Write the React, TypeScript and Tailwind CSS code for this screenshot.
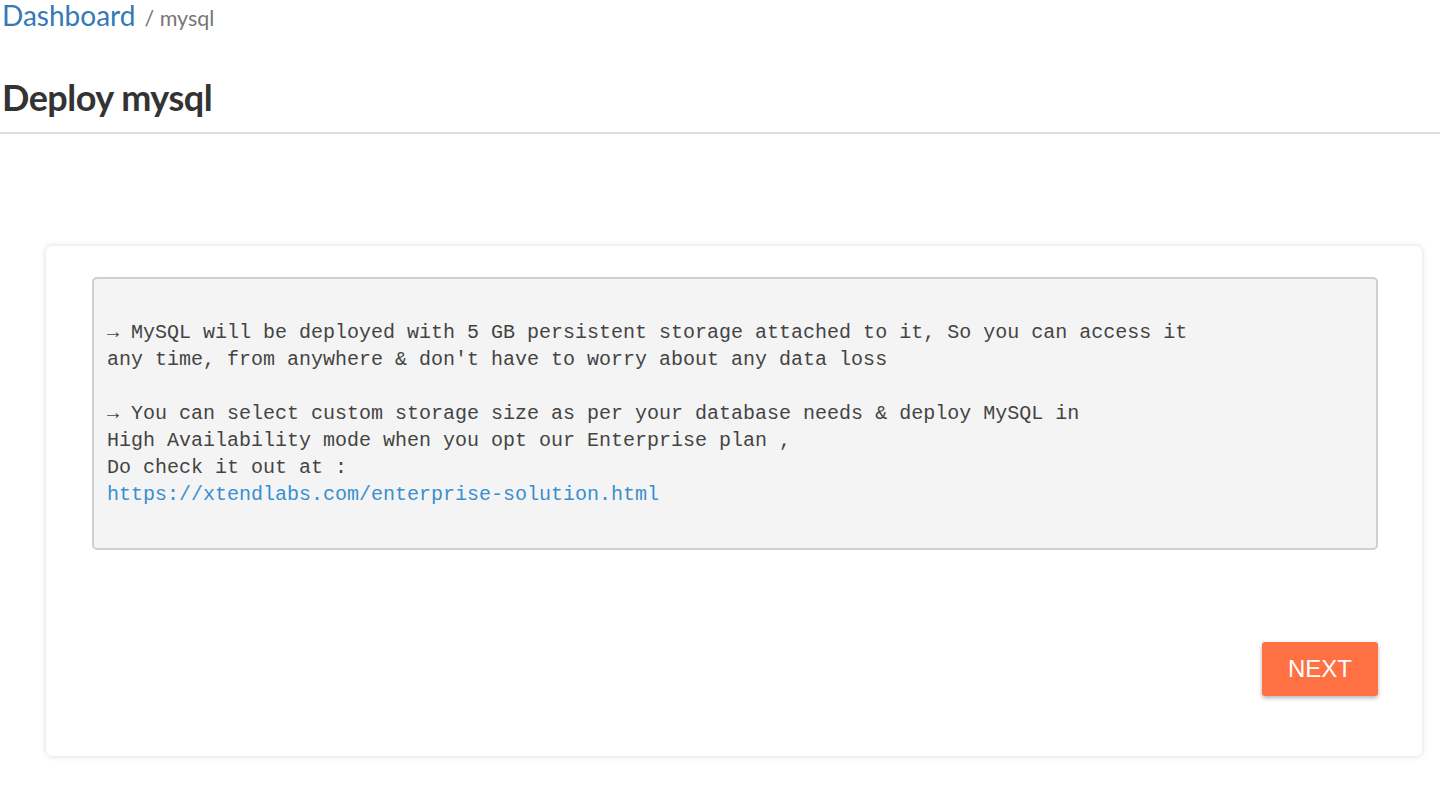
export default function App() {
  return (
    <div className="min-h-[788px] bg-white font-['Lato',sans-serif] text-[#333]">
      {/* breadcrumb */}
      <div className="flex items-baseline px-[2px] leading-[30px]">
        <a className="text-[28px] text-[#337ab7]">Dashboard</a>
        <span className="ml-[9px] text-[21.5px] text-[#777]">/ mysql</span>
      </div>

      <h1 className="mt-[42px] px-[2px] text-[36px] font-bold leading-[44px] tracking-[-0.5px] text-[#333]">
        Deploy mysql
      </h1>
      <div className="mt-[13px] h-[2px] bg-[#ddd]" />

      <div className="ml-[46px] mr-[18px] mt-[112px] rounded-[6px] bg-white pb-[60px] pl-[46px] pr-[44px] pt-[31px] shadow-[0_0_6px_rgba(0,0,0,0.15)]">
        <pre className="whitespace-pre rounded-[5px] border-2 border-[#cfcfcf] bg-[#f4f4f4] px-[13px] py-[40px] font-['Liberation_Mono',monospace] text-[20px] leading-[27px] text-[#444]">
          {"→ MySQL will be deployed with 5 GB persistent storage attached to it, So you can access it\nany time, from anywhere & don't have to worry about any data loss\n\n→ You can select custom storage size as per your database needs & deploy MySQL in\nHigh Availability mode when you opt our Enterprise plan ,\nDo check it out at :\n"}
          <a className="text-[#3a8fd0]">https://xtendlabs.com/enterprise-solution.html</a>
        </pre>

        <div className="mt-[92px] flex justify-end">
          <button className="h-[54px] w-[116px] rounded-[3px] bg-[#ff7043] font-['Liberation_Sans',Arial,sans-serif] text-[24px] text-white shadow-[0_2px_4px_rgba(0,0,0,0.3)]">
            NEXT
          </button>
        </div>
      </div>
    </div>
  );
}
